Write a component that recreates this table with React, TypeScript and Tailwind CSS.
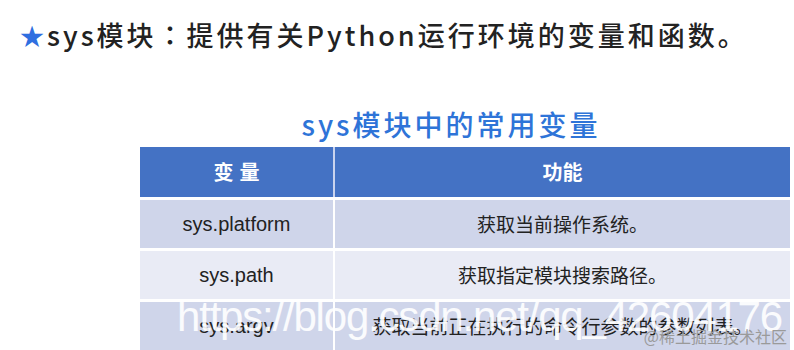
import React from 'react';

const rows = [
  { name: 'sys.platform', desc: '获取当前操作系统。' },
  { name: 'sys.path', desc: '获取指定模块搜索路径。' },
  { name: 'sys.argv', desc: '获取当前正在执行的命令行参数的参数列表。' },
];

export default function App() {
  return (
    <div className="relative w-[794px] h-[350px] overflow-hidden bg-white">
      {/* heading line */}
      <div className="flex items-center h-[70px] pl-[20px] text-[27px] tracking-[3px] text-[#222] font-medium font-['Noto_Sans_CJK_SC',sans-serif]">
        <span className="text-[#2f6fe0] text-[24px] mr-[3px] tracking-normal">★</span>
        <span>
          sys模块<span className="font-['Noto_Sans_CJK_TC',sans-serif]">：</span>提供有关Python运行环境的变量和函数。
        </span>
      </div>

      <div className="flex justify-center pl-[140px] pr-[4px] mt-[40px]">
        <div className="text-[28px] tracking-[3px] text-[#2e74d8] font-medium leading-none mr-[28px] font-['Noto_Sans_CJK_SC',sans-serif]">
          sys模块中的常用变量
        </div>
      </div>

      <div className="ml-[140px] mr-[4px] mt-[9px] flex flex-col gap-[3px]">
        <div className="grid grid-cols-[195px_1fr] h-[50px] bg-[#4472c4] text-white text-[20px] font-bold font-['Noto_Sans_CJK_SC',sans-serif]">
          <div className="flex items-center justify-center border-r-[2px] border-[#c9d3ee] tracking-[6px] pl-[6px]">变量</div>
          <div className="flex items-center justify-center">功能</div>
        </div>
        {rows.map((r, i) => (
          <div
            key={r.name}
            className={`grid grid-cols-[195px_1fr] h-[48px] ${i % 2 === 0 ? 'bg-[#cfd5ea]' : 'bg-[#e9ebf5]'}`}
          >
            <div className="flex items-center justify-center border-r-[2px] border-white text-[20px] text-[#222] font-['Arial','Liberation_Sans',sans-serif]">
              {r.name}
            </div>
            <div className="flex items-center justify-center text-[19px] text-[#222] font-['Noto_Sans_CJK_SC',sans-serif]">
              {r.desc}
            </div>
          </div>
        ))}
      </div>

      {/* watermark overlays */}
      <div className="absolute left-[177px] top-[296px] text-[42px] tracking-[-1.2px] text-white/90 leading-none whitespace-nowrap font-['Arial','Liberation_Sans',sans-serif]">
        https://blog.csdn.net/qq_42604176
      </div>
      <div className="absolute right-[7px] top-[328px] text-[16px] text-[#9a9a9a] leading-none whitespace-nowrap font-['Noto_Sans_CJK_SC',sans-serif]">
        @稀土掘金技术社区
      </div>
    </div>
  );
}
